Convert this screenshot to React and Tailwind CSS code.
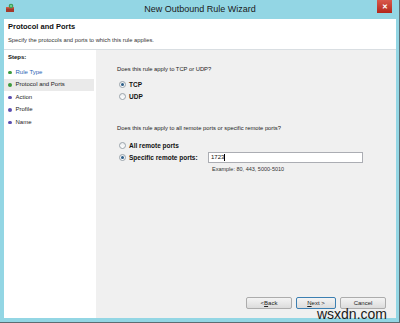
const steps = [
  { label: 'Rule Type', done: true },
  { label: 'Protocol and Ports', done: true, active: true },
  { label: 'Action' },
  { label: 'Profile' },
  { label: 'Name' },
]

function Radio({ checked, label }) {
  return (
    <div className="flex items-center gap-[3px] h-[12px]">
      <span className="w-[7px] h-[7px] rounded-full border border-[#9aa3ab] bg-gradient-to-b from-[#e9ecef] to-white flex items-center justify-center">
        {checked && <span className="w-[3px] h-[3px] rounded-full bg-[#2c5d87]" />}
      </span>
      <span className="font-bold text-[6.5px] text-[#111]">{label}</span>
    </div>
  )
}

function WizButton({ children, focus }) {
  return (
    <div
      className={`h-[12px] flex items-center justify-center rounded-[2px] border text-[6px] text-[#222]
        bg-gradient-to-b from-[#f4f4f4] to-[#dcdcdc]
        ${focus ? 'border-[#3c7fb1] w-[40px]' : 'border-[#acacac] w-[46px]'}`}
    >
      {children}
    </div>
  )
}

export default function App() {
  return (
    <div
      className="w-[400px] h-[323px] bg-[#93d6e4] flex flex-col relative overflow-hidden"
      style={{ fontFamily: '"Liberation Sans", Arial, sans-serif' }}
    >
      {/* title bar */}
      <div className="h-[19px] flex items-center relative shrink-0">
        <svg className="absolute left-[5px] top-[3px]" width="10" height="10" viewBox="0 0 10 10">
          <rect x="1" y="4" width="8" height="5" fill="#a33a2c" />
          <rect x="1" y="4" width="8" height="1.5" fill="#d05a45" />
          <circle cx="6" cy="3" r="2.3" fill="#3d9a5a" />
          <circle cx="6" cy="3" r="1.2" fill="#6fd08a" />
        </svg>
        <div className="flex-1 text-center text-[9px] text-[#1a1a1a] pt-[1px]">New Outbound Rule Wizard</div>
        <div className="absolute right-[8px] top-0 w-[15px] h-[13px] bg-gradient-to-b from-[#d9574a] to-[#b3261b] flex items-center justify-center">
          <span className="text-white font-bold text-[7px] leading-none">✕</span>
        </div>
      </div>

      {/* client */}
      <div className="flex-1 flex flex-col ml-[4px] mr-[4px] mb-[5px] bg-white">
        <div className="h-[31px] shrink-0 border-b border-[#d9dee2] pl-[4px] pt-[4px]">
          <div className="font-bold text-[7.5px] text-[#111] leading-none">Protocol and Ports</div>
          <div className="text-[5.8px] text-[#333] mt-[7px] leading-none">Specify the protocols and ports to which this rule applies.</div>
        </div>

        <div className="flex-1 flex">
          <div className="w-[92px] shrink-0 bg-white pt-[4px]">
            <div className="font-bold text-[6px] text-[#111] pl-[4px] leading-none mb-[6px]">Steps:</div>
            <div className="flex flex-col">
              {steps.map((s) => (
                <div
                  key={s.label}
                  className={`h-[12.5px] flex items-center gap-[4px] pl-[4px] mr-[2px] ${s.active ? 'bg-[#eaeaea]' : ''}`}
                >
                  <span className={`w-[3.5px] h-[3.5px] rounded-full ${s.done ? 'bg-[#3c9a3c]' : 'bg-[#5b4fb0]'}`} />
                  <span className={`text-[6px] ${s.label === 'Rule Type' ? 'text-[#2a64b4]' : 'text-[#222]'}`}>{s.label}</span>
                </div>
              ))}
            </div>
          </div>

          <div className="flex-1 bg-[#f0f0f0] flex flex-col pl-[21px] pr-[6px] pt-[17px] pb-[8px]">
            <div className="text-[5.8px] text-[#222] leading-none">Does this rule apply to TCP or UDP?</div>
            <div className="mt-[6px] pl-[2px] flex flex-col">
              <Radio checked label="TCP" />
              <Radio label="UDP" />
            </div>
            <div className="text-[5.8px] text-[#222] leading-none mt-[23px]">Does this rule apply to all remote ports or specific remote ports?</div>
            <div className="mt-[8px] pl-[2px] flex flex-col">
              <Radio label="All remote ports" />
              <div className="flex items-center">
                <div className="w-[89px]">
                  <Radio checked label="Specific remote ports:" />
                </div>
                <div className="w-[155px] h-[11px] bg-white border border-[#abadb3] flex items-center pl-[2px] text-[6px] text-[#111]">
                  1723<span className="w-[0.5px] h-[7px] bg-black" />
                </div>
              </div>
              <div className="pl-[93px] mt-[3px] text-[5.5px] text-[#333] leading-none">Example: 80, 443, 5000-5010</div>
            </div>

            <div className="flex-1" />
            <div className="flex justify-end gap-[4px] pr-[4px] mb-[1px]">
              <WizButton>&lt; <u>B</u>ack</WizButton>
              <WizButton focus><u>N</u>ext &gt;</WizButton>
              <WizButton>Cancel</WizButton>
            </div>
          </div>
        </div>
      </div>
      <div className="absolute left-0 right-0 bottom-0 h-[1px] bg-[#5c6d73]" />
      <div className="absolute top-0 bottom-0 right-0 w-[1px] bg-[#5c6d73]" />

      <div className="absolute right-[12px] bottom-[2px] text-[14px] text-[#1a1a1a] leading-none px-[1px]">wsxdn.com</div>
    </div>
  )
}
